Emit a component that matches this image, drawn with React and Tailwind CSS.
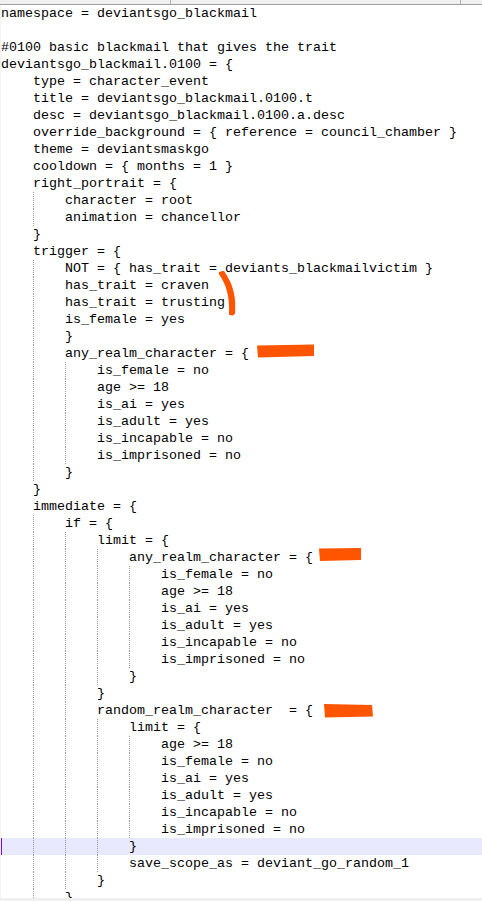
import React from "react";

const lines = [
  "namespace = deviantsgo_blackmail",
  "",
  "#0100 basic blackmail that gives the trait",
  "deviantsgo_blackmail.0100 = {",
  "    type = character_event",
  "    title = deviantsgo_blackmail.0100.t",
  "    desc = deviantsgo_blackmail.0100.a.desc",
  "    override_background = { reference = council_chamber }",
  "    theme = deviantsmaskgo",
  "    cooldown = { months = 1 }",
  "    right_portrait = {",
  "        character = root",
  "        animation = chancellor",
  "    }",
  "    trigger = {",
  "        NOT = { has_trait = deviants_blackmailvictim }",
  "        has_trait = craven",
  "        has_trait = trusting",
  "        is_female = yes",
  "        }",
  "        any_realm_character = {",
  "            is_female = no",
  "            age >= 18",
  "            is_ai = yes",
  "            is_adult = yes",
  "            is_incapable = no",
  "            is_imprisoned = no",
  "        }",
  "    }",
  "    immediate = {",
  "        if = {",
  "            limit = {",
  "                any_realm_character = {",
  "                    is_female = no",
  "                    age >= 18",
  "                    is_ai = yes",
  "                    is_adult = yes",
  "                    is_incapable = no",
  "                    is_imprisoned = no",
  "                }",
  "            }",
  "            random_realm_character  = {",
  "                limit = {",
  "                    age >= 18",
  "                    is_female = no",
  "                    is_ai = yes",
  "                    is_adult = yes",
  "                    is_incapable = no",
  "                    is_imprisoned = no",
  "                }",
  "                save_scope_as = deviant_go_random_1",
  "            }",
  "        }",
];

const CURRENT = 49;

function Line({ text, current }) {
  const indent = text.length - text.trimStart().length;
  const levels = Math.floor(indent / 4);
  const blocks = [];
  for (let i = 0; i < levels; i++) {
    blocks.push(
      <div
        key={i}
        className={
          i === 0
            ? current
              ? "w-[32px] h-full shrink-0 border-l border-[#8000ff]"
              : "w-[32px] h-full shrink-0"
            : "w-[32px] h-full shrink-0 border-l border-dotted border-[#9a9a9a]"
        }
      />
    );
  }
  return (
    <div
      className={
        current
          ? "flex h-[17px] shrink-0 items-center bg-[#e8e8ff]"
          : "flex h-[17px] shrink-0 items-center"
      }
    >
      {blocks}
      <span className="whitespace-pre leading-[17px]">{text.trimStart()}</span>
    </div>
  );
}

export default function App() {
  return (
    <div className="w-[482px] h-[901px] overflow-hidden bg-white flex flex-col font-['Liberation_Mono','Courier_New',monospace] text-[13.333px] text-black">
      <div className="h-[4px] shrink-0 bg-[#f0f0f0] flex">
        <div className="ml-[170px] w-px h-full bg-[#b0b0b0]" />
        <div className="ml-[289px] w-px h-full bg-[#b0b0b0]" />
      </div>
      <div className="h-px shrink-0 bg-[#a0a0a0]" />
      <div className="flex-1 flex min-h-0 relative overflow-hidden">
        <div className="w-px shrink-0 bg-[#f4f4f4]" />
        <div className="flex-1 flex flex-col min-w-0">
          {lines.map((t, i) => (
            <Line key={i} text={t} current={i === CURRENT} />
          ))}
        </div>
        <svg
          className="absolute left-0 top-0 pointer-events-none"
          width="482"
          height="893"
          viewBox="0 5 482 893"
        >
          <path
            d="M219 272 L224 271 C 230 280, 237 292, 235 314 L229 315 C 230 296, 226 284, 219 274 Z"
            fill="#ff5500"
          />
          <path
            d="M222 274 C 228 282, 233 294, 232 313"
            stroke="#ff5500"
            strokeWidth="5"
            strokeLinecap="round"
            fill="none"
          />
          <path d="M257 345.5 L314 344.5 L314 356 L258 357.5 Z" fill="#ff5500" />
          <path d="M319 548.5 L361 548 L361 560 L320 561 Z" fill="#ff5500" />
          <path d="M324 704 L372 705 L373 716.5 L325 717.5 Z" fill="#ff5500" />
        </svg>
      </div>
      <div className="h-[3px] shrink-0 bg-[#f0f0f0]" />
    </div>
  );
}
